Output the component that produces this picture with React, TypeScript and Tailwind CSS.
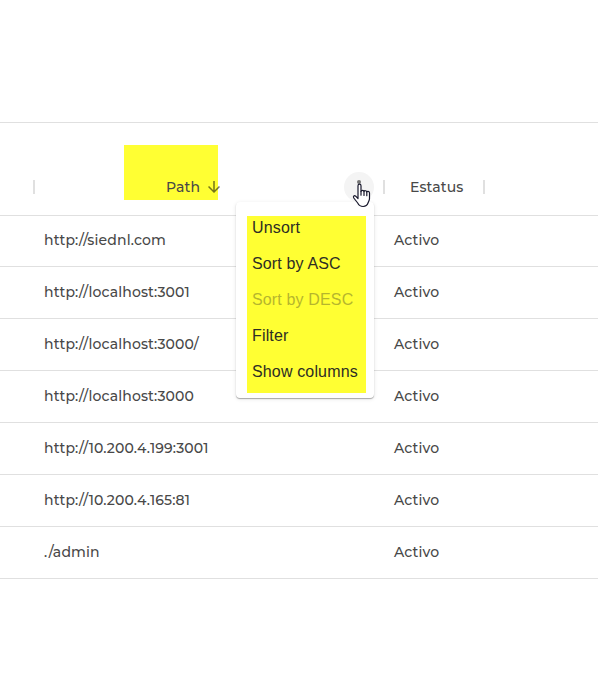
import React from 'react';

const rows = [
  'http://siednl.com',
  'http://localhost:3001',
  'http://localhost:3000/',
  'http://localhost:3000',
  'http://10.200.4.199:3001',
  'http://10.200.4.165:81',
  './admin',
];

const options = [
  { label: 'Unsort' },
  { label: 'Sort by ASC' },
  { label: 'Sort by DESC', disabled: true },
  { label: 'Filter' },
  { label: 'Show columns' },
];

function Separator() {
  return <span className="h-3.5 w-0.5 shrink-0 bg-[#e0e0e0]" />;
}

function SortArrow() {
  return (
    <svg className="ml-[5px] size-[18px]" viewBox="0 0 24 24" fill="#000" fillOpacity="0.54">
      <path d="M20 12l-1.410-1.410L13 16.170V4h-2v12.170l-5.580-5.590L4 12l8 8 8-8z" />
    </svg>
  );
}

function HandCursor() {
  return (
    <svg className="absolute top-[11px] left-2 h-[25px] w-[19px]" viewBox="0 0 19 25" fill="#fff" stroke="#17172b" strokeWidth="1.2" strokeLinejoin="round" strokeLinecap="round">
      <path d="M6 15.500V2.700C6 .5 9 .5 9 2.700v5.800c0-1.500 3-1.500 3 .1 0-1.300 2.800-1.200 2.800.5 0-1.200 2.700-1 2.700.8v5.600c0 2-1 3-1.400 4.300-.7 2.200-2.400 3.700-5 3.700-2.700 0-4.300-1.300-5.400-3.500L1.800 15c-1-1.700.5-3 1.900-1.800z" />
      <path d="M9 8.500v3.700M12 8.700v3.800M14.800 9.300v3.400" fill="none" />
    </svg>
  );
}

function ColumnMenu() {
  return (
    <div className="absolute top-[30px] -left-[108px] z-10 h-[196px] w-[138px] rounded bg-white pt-3.5 pl-[11px] shadow-[0_1px_1px_rgba(0,0,0,0.3),0_1px_4px_rgba(0,0,0,0.1)]">
      <ul className="h-[177px] w-[119px] bg-[#ffff33] pl-[5px] font-['Liberation_Sans',Arial,sans-serif] text-base tracking-[0.15px] text-[#2d2d24]">
        {options.map((o) => (
          <li key={o.label} className={`h-9 whitespace-nowrap leading-6 ${o.disabled ? 'opacity-35' : ''}`}>
            {o.label}
          </li>
        ))}
      </ul>
    </div>
  );
}

export default function App() {
  return (
    <div className="h-[681px] w-[598px] overflow-hidden bg-white pt-[122px] font-[Montserrat,Inter,sans-serif] text-sm font-medium tracking-[0.15px] text-[#484848]">
      <header className="flex h-[94px] items-center border-y border-[#e0e0e0] pt-9 pl-[33px]">
        <Separator />
        <div className="relative flex h-[30px] w-[348px] items-center">
          <div className="absolute -top-[27px] left-[89px] h-[55px] w-[94px] bg-[#ffff33]" />
          <div className="relative ml-[131px] flex items-center">
            <span className="w-[34px]">Path</span>
            <SortArrow />
          </div>
          <div className="relative ml-auto mr-[9px] size-[30px] rounded-full bg-[#f4f4f4]">
            <span className="absolute top-2 left-[13px] size-1 rounded-full bg-[#757575]" />
            <ColumnMenu />
            <div className="absolute inset-0 z-20"><HandCursor /></div>
          </div>
        </div>
        <Separator />
        <div className="w-[98px] pl-[25px]">Estatus</div>
        <Separator />
      </header>
      <main>
        {rows.map((path) => (
          <div key={path} className="flex h-[52px] items-center border-b border-[#e0e0e0] pb-0.5 pl-11 first:h-[51px]">
            <span className="w-[350px] whitespace-nowrap">{path}</span>
            <span>Activo</span>
          </div>
        ))}
      </main>
    </div>
  );
}
